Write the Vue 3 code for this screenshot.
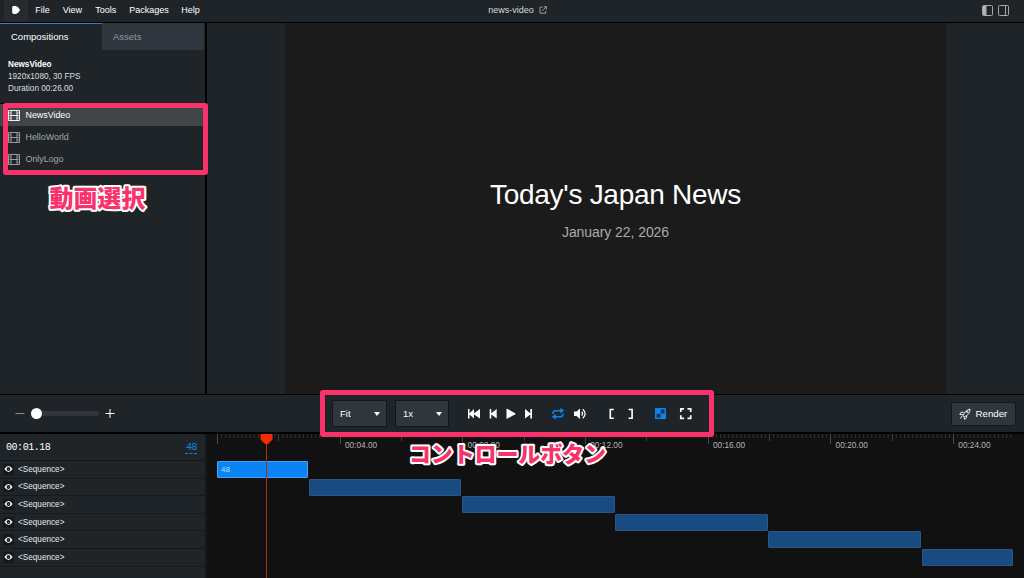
<template>
  <div class="studio">
    <header class="menubar">
      <div class="logo">
        <svg width="10" height="10" viewBox="0 0 10 10"><path d="M1.2 2.4Q1.3 1 2.8 1H4.6Q6 1.1 7.2 2.4L8.5 4Q9.3 5 8.5 6L7.2 7.6Q6 8.9 4.6 9H2.8Q1.3 9 1.2 7.6Z" fill="#fff" /></svg>
      </div>
      <nav class="menu">
        <span v-for="m in menus" :key="m.label" class="menu-item" :style="{ width: m.width + 'px' }">{{ m.label }}</span>
      </nav>
      <div class="project">
        news-video
        <svg width="8" height="8" viewBox="0 0 8 8" fill="none" stroke="#a6a9ad" stroke-width="0.9"><path d="M3.5 1.2H1V7.2H6.8V4.8M4.7.7H7.4V3.5M7.2.9L3.2 4.8" /></svg>
      </div>
      <div class="layout-icons">
        <svg width="11" height="11" viewBox="0 0 11 11"><rect x=".5" y=".5" width="10" height="10" rx="1" fill="none" stroke="#a6a7a9" /><rect x="1" y="1" width="3.5" height="9" fill="#b0b1b3" /></svg>
        <svg width="11" height="11" viewBox="0 0 11 11"><rect x=".5" y=".5" width="10" height="10" rx="1" fill="none" stroke="#a6a7a9" /><path d="M7.5 1V10" stroke="#a6a7a9" /></svg>
      </div>
    </header>

    <main class="workspace">
      <aside class="sidebar">
        <div class="tabs">
          <div class="tab active">Compositions</div>
          <div class="tab">Assets</div>
        </div>
        <div class="info">
          <b>NewsVideo</b>
          <span>1920x1080, 30 FPS</span>
          <span>Duration 00:26.00</span>
        </div>
        <div class="compositions">
          <div v-for="(c, i) in compositions" :key="c" class="composition" :class="{ selected: i === 0 }">
            <svg width="12" height="11" viewBox="0 0 12 11" fill="none" stroke="currentColor"><path d="M.5.5H11.5V10.5H.5ZM3 .5V10.5M9 .5V10.5M3 5.5H9" stroke-width=".9" /><path d="M.5 3H3M.5 5.5H3M.5 8H3M9 3H11.5M9 5.5H11.5M9 8H11.5" stroke-width=".7" /></svg>
            {{ c }}
          </div>
        </div>
      </aside>
      <section class="preview">
        <div class="canvas">
          <h1>Today's Japan News</h1>
          <p>January 22, 2026</p>
        </div>
      </section>
    </main>

    <section class="toolbar">
      <div class="zoom">
        <svg width="10" height="10" viewBox="0 0 10 10"><path d="M.5 4.5H9.5" stroke="#8b8e91" /></svg>
        <div class="slider"><i></i></div>
        <svg width="10" height="10" viewBox="0 0 10 10"><path d="M.5 4.5H9.5M5 0V9" stroke="#fff" /></svg>
      </div>
      <div class="controls">
        <div class="select">Fit <i></i></div>
        <div class="select speed">1x <i></i></div>
        <svg class="playback" width="240" height="16" viewBox="0 0 240 16" fill="#fff">
          <path d="M4 3H5.5V7.2L10 3V7.2L16 3V12.5L10 8.4V12.5L5.5 8.4V12.5H4Z" />
          <path d="M25.7 3H27.3V7.2L32.7 3V12.5L27.3 8.4V12.5H25.7Z" />
          <path d="M42.5 3Q42.5 2.5 43 2.7L51.2 7.2Q51.8 7.7 51.2 8.2L43 12.8Q42.5 13 42.5 12.6Z" />
          <path d="M61 3L66.3 7.2V3H68V12.5H66.3V8.4L61 12.5Z" />
          <g fill="none" stroke="#0b84f3" stroke-width="1.5"><path d="M89 8V7.4Q89 4.7 91.5 4.7H97.5M99 7.4V8Q99 10.7 96.5 10.7H90.5" /></g>
          <path d="M96.3 1.8L100.2 4.7L96.3 7.6ZM91.7 7.8L87.8 10.7L91.7 13.6Z" fill="#0b84f3" />
          <path d="M110 5.6H112.5L116 2.5V13L112.5 9.9H110Z" />
          <path d="M117.7 5.8Q119.5 7.7 117.7 9.6M118.8 3.2Q123.4 7.7 118.8 12.2" fill="none" stroke="#fff" stroke-width="1.3" />
          <path d="M149.8 3.5H146.3V12.2H149.8M164.6 3.5H168.1V12.2H164.6" fill="none" stroke="#fff" stroke-width="1.6" />
          <rect x="191" y="2" width="11" height="11" rx=".6" fill="#0b84f3" />
          <path d="M192.5 7.7H196.5V11.7H192.5ZM196.7 3.5H200.5V7.5H196.7Z" fill="#1b3552" />
          <path d="M216.8 6V2.9H220M223.5 2.9H226.7V6M226.7 9.2V12.3H223.5M220 12.3H216.8V9.2" fill="none" stroke="#fff" stroke-width="1.7" />
        </svg>
      </div>
      <button class="render">
        <svg width="12" height="12" viewBox="0 0 12 12" fill="none" stroke="#fff" stroke-width=".9"><path d="M4.2 7.8Q5 3.2 11 1Q11 6.8 5.2 8.9ZM4.7 4.3H2L.8 6.4L4 6.8M7.6 7.8V9.8L5.6 11.4L5 8.8M3 8L1.2 10.6" /><circle cx="8.2" cy="3.8" r=".8" /></svg>
        Render
      </button>
    </section>

    <section class="timeline">
      <aside class="layers">
        <div class="time"><span>00:01.18</span><span class="frame">48</span></div>
        <div v-for="n in 6" :key="n" class="layer">
          <span class="eye">
            <svg width="9" height="8" viewBox="0 0 9 8"><path d="M.4 4Q4.5-2 8.6 4Q4.5 10 .4 4Z" fill="#fff" /><circle cx="4.5" cy="4" r="1.9" fill="#15181b" /><circle cx="4.5" cy="4" r=".6" fill="#8f9193" /></svg>
          </span>
          &lt;Sequence&gt;
        </div>
      </aside>
      <div class="tracks">
        <svg class="ruler" width="817" height="27" viewBox="0 0 817 27">
          <path v-for="t in ticks" :key="t.x" :d="`M${t.x} 0V${t.h}`" :stroke="t.color" />
          <text v-for="s in [4, 8, 12, 16, 20, 24]" :key="s" :x="15.2 + s * PX_PER_SECOND" y="14">00:{{ String(s).padStart(2, '0') }}.00</text>
        </svg>
        <div v-for="(b, i) in bars" :key="i" class="track">
          <div class="bar" :class="{ first: i === 0 }" :style="{ marginLeft: b.start + 'px', width: b.width + 'px' }">{{ i === 0 ? '48' : '' }}</div>
        </div>
        <svg class="playhead" width="13" height="144" viewBox="0 0 13 144"><path d="M6.5 9V144" stroke="#a83018" /><path d="M.5 0H12.5V5.5L8.5 9.6Q6.5 11 4.5 9.6L.5 5.5Z" fill="#f02c00" /></svg>
      </div>
    </section>

    <div class="highlight list-highlight"></div>
    <div class="highlight control-highlight"></div>
    <svg class="notes" width="1024" height="578">
      <text x="49.5" y="206.5" textLength="96" font-size="24">動画選択</text>
      <text x="409" y="462" textLength="197" font-size="22">コントロールボタン</text>
    </svg>
  </div>
</template>

<script setup>
const menus = [
  { label: 'File', width: 27.5 },
  { label: 'View', width: 32.5 },
  { label: 'Tools', width: 34 },
  { label: 'Packages', width: 52 },
  { label: 'Help', width: 30 },
]

const compositions = ['NewsVideo', 'HelloWorld', 'OnlyLogo']

const PX_PER_SECOND = 30.67

// one tick every 4 frames at 30 fps, taller ones every 2 and 4 seconds
const ticks = Array.from({ length: 195 }, (_, i) => {
  const x = 10.5 + (i / 7.5) * PX_PER_SECOND
  if (i % 30 === 0) return { x: Math.floor(x) + 0.5, h: 10, color: '#45484a' }
  if (i % 15 === 0) return { x: Math.floor(x) + 0.5, h: 7, color: '#3b3e40' }
  return { x, h: 4, color: '#2e3133' }
})

const bars = [
  { start: 10, width: 91 },
  { start: 102, width: 152 },
  { start: 255, width: 153 },
  { start: 408, width: 153 },
  { start: 561, width: 153 },
  { start: 715, width: 91 },
]
</script>

<style>
body { margin: 0; background: #111; }
</style>

<style scoped>
.studio {
  position: relative;
  width: 1024px;
  height: 578px;
  overflow: hidden;
  display: flex;
  flex-direction: column;
  background: #1f2428;
  color: #fff;
  font-family: "Liberation Sans", Arial, sans-serif;
  font-size: 9px;
}
.studio * { box-sizing: border-box; }
svg { display: block; flex: none; }

.menubar {
  position: relative;
  height: 23px;
  flex: none;
  display: flex;
  border-bottom: 1px solid #000;
  line-height: 20px;
}
.logo {
  width: 24px;
  margin-left: 4px;
  background: #272b2f;
  display: grid;
  place-items: center;
  padding-bottom: 2px;
}
.menu { display: flex; margin-left: 7.2px; }
.menu-item { white-space: nowrap; }
.project {
  position: absolute;
  left: 488.3px;
  display: flex;
  align-items: center;
  gap: 5px;
  color: #d5d7d9;
}
.layout-icons { display: flex; gap: 5px; margin-left: auto; padding: 5px 15px 0 0; }

.workspace { display: flex; height: 371px; flex: none; }
.sidebar { width: 207px; border-right: 2px solid #000; }
.tabs { display: flex; height: 27px; line-height: 27px; font-size: 9.5px; }
.tab { width: 102px; padding-left: 11px; background: #2f363d; color: #94989d; }
.tab.active { background: none; color: #fff; border-top: 1px solid #3a7bd0; line-height: 26px; }
.info {
  height: 54px;
  padding: 9px 8px 7px;
  border-bottom: 1px solid #000;
  display: flex;
  flex-direction: column;
  font-size: 8.2px;
  line-height: 12px;
  color: #dcdee0;
}
.info b { color: #fff; }
.composition {
  display: flex;
  align-items: center;
  gap: 5.5px;
  height: 22.2px;
  padding-left: 8px;
  font-size: 8.9px;
  color: #a6a7a9;
}
.composition.selected { background: #424548; color: #fff; }

.preview { flex: 1; padding-left: 78px; }
.canvas { width: 661px; height: 371px; background: #1b1b1b; text-align: center; padding-top: 155px; }
.canvas h1 { margin: 0; font-size: 28px; line-height: 34px; font-weight: 400; letter-spacing: -0.27px; }
.canvas p { margin: 11px 0 0; font-size: 14px; line-height: 18px; letter-spacing: -0.07px; color: #aaa; }

.toolbar {
  height: 40px;
  flex: none;
  display: flex;
  align-items: center;
  border-top: 1px solid #000;
  border-bottom: 2px solid #000;
}
.zoom { display: flex; align-items: center; width: 332px; padding-left: 15px; gap: 6px; }
.slider { width: 68px; height: 5px; border-radius: 3px; background: #32363a; display: flex; align-items: center; }
.slider i { width: 11px; height: 11px; border-radius: 50%; background: #fff; }
.controls { display: flex; align-items: center; }
.select {
  width: 55px;
  height: 27px;
  padding: 0 6px 0 7px;
  margin-right: 8px;
  display: flex;
  align-items: center;
  justify-content: space-between;
  background: #2f363d;
  border: 1px solid #14181c;
  font-size: 9.5px;
}
.select.speed { width: 54px; margin-right: 15px; }
.select i { border: 3.5px solid transparent; border-top: 4px solid #fff; border-bottom: 0; }
.render {
  margin-left: auto;
  margin-right: 8px;
  width: 65px;
  height: 24px;
  padding: 0 7px;
  display: flex;
  align-items: center;
  gap: 4.5px;
  background: #2f363d;
  border: 1px solid #14181c;
  border-radius: 2px;
  color: #fff;
  font: 9.7px "Liberation Sans", Arial, sans-serif;
}

.timeline { display: flex; height: 144px; flex: none; }
.layers { width: 207px; border-right: 2px solid #15181b; }
.time {
  height: 27px;
  display: flex;
  justify-content: space-between;
  padding: 0 8px 0 6px;
  border-bottom: 1px solid #15191c;
  font: 10px/27px "Liberation Mono", "Courier New", monospace;
  letter-spacing: -0.45px;
}
.frame { color: #1683df; text-decoration: underline dashed; text-underline-offset: 3px; text-decoration-thickness: 1px; }
.layer {
  height: 17.6px;
  display: flex;
  align-items: center;
  gap: 4px;
  padding-left: 3px;
  border-bottom: 1px solid #15191c;
  font-size: 8.2px;
  color: #e7e8ea;
}
.eye { width: 11px; height: 11px; display: grid; place-items: center; background: #15181b; border-radius: 2px; }
.tracks { position: relative; width: 817px; background: #111; }
.ruler text { font-size: 8.3px; fill: #b5b5b5; }
.track { height: 17.6px; }
.bar {
  height: 17px;
  background: #174b82;
  border: 1px solid #2b5681;
  border-radius: 1px;
  font-size: 8px;
  line-height: 15px;
  padding-left: 3px;
  color: #b9dcff;
}
.bar.first { background: #0b84f3; border-color: #48a1f5; }
.playhead { position: absolute; left: 53px; top: 0; }

.highlight { position: absolute; border: 5px solid #f9326b; border-radius: 3px; }
.list-highlight { left: 3px; top: 103px; width: 205px; height: 72px; }
.control-highlight { left: 320px; top: 390px; width: 394px; height: 47px; }
.notes { position: absolute; left: 0; top: 0; pointer-events: none; }
.notes text {
  font-family: "Noto Sans CJK JP", sans-serif;
  font-weight: 900;
  fill: #f9326b;
  stroke: #fff;
  stroke-width: 4px;
  stroke-linejoin: round;
  paint-order: stroke;
}
</style>
